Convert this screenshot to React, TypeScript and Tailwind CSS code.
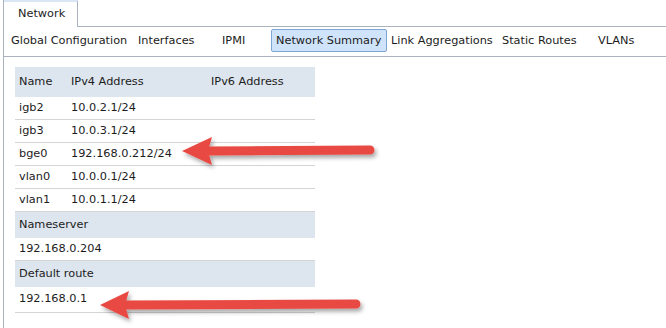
import React from 'react';

const subTabs = [
  { label: 'Global Configuration', w: 'w-[127px]' },
  { label: 'Interfaces', w: 'w-[84px]' },
  { label: 'IPMI', w: 'w-[49px]' },
  { label: 'Network Summary', w: 'w-[120px]', active: true },
  { label: 'Link Aggregations', w: 'w-[111px]' },
  { label: 'Static Routes', w: 'w-[96px]' },
  { label: 'VLANs', w: 'w-[60px]' },
];

const ifaces = [
  ['igb2', '10.0.2.1/24'],
  ['igb3', '10.0.3.1/24'],
  ['bge0', '192.168.0.212/24'],
  ['vlan0', '10.0.0.1/24'],
  ['vlan1', '10.0.1.1/24'],
];

function Arrow({ tip, back, end, y }: { tip: number; back: number; end: number; y: number }) {
  return (
    <g>
      <line x1={back - 4} y1={y} x2={end} y2={y - 1} stroke="#e84a42" strokeWidth={9} strokeLinecap="round" />
      <polygon points={`${tip},${y} ${back},${y - 14} ${back - 4},${y} ${back},${y + 14}`} fill="#e84a42" />
    </g>
  );
}

export default function App() {
  return (
    <div className="relative w-[666px] h-[328px] overflow-hidden bg-white font-['DejaVu_Sans',sans-serif] text-[11.3px] text-[#1c1c1c]">
      <div className="ml-[3px] h-full border-l border-[#aab3bd]">
        {/* top tab */}
        <div className="flex h-[27px]">
          <div className="w-[74px] border-r border-t-2 border-r-[#aab3bd] border-t-[#d9e6f5] pl-[14px] pt-[4px]">Network</div>
          <div className="flex-1 border-b border-[#aab3bd]" />
        </div>

        {/* sub tabs */}
        <div className="flex h-[30px] border-b border-[#aab3bd] pl-[2px] pt-[2px]">
          {subTabs.map((t) =>
            t.active ? (
              <div key={t.label} className={`${t.w} pl-[5px]`}>
                <div className="flex h-[23px] w-[116px] items-center rounded-[2px] border border-[#7fa6d2] bg-[#cfe3fa] pl-[4px] pt-[1px]">
                  {t.label}
                </div>
              </div>
            ) : (
              <div key={t.label} className={`${t.w} flex h-[23px] items-center pl-[5px] pt-[1px]`}>
                {t.label}
              </div>
            )
          )}
        </div>

        {/* summary table */}
        <div className="ml-[11px] mt-[10px] w-[300px]">
          <div className="flex h-[30px] items-center bg-[#dde5ee] pt-[1px]">
            <div className="w-[52px] pl-[4px]">Name</div>
            <div className="w-[140px] pl-[4px]">IPv4 Address</div>
            <div className="pl-[4px]">IPv6 Address</div>
          </div>
          {ifaces.map(([name, ip]) => (
            <div key={name} className="flex h-[23px] items-center border-b border-[#d4d4d4]">
              <div className="w-[52px] pl-[4px]">{name}</div>
              <div className="w-[140px] pl-[4px]">{ip}</div>
            </div>
          ))}
          <div className="flex h-[26px] items-center bg-[#dde5ee] pl-[4px]">Nameserver</div>
          <div className="flex h-[23px] items-center border-b border-[#d4d4d4] pl-[4px]">192.168.0.204</div>
          <div className="flex h-[26px] items-center bg-[#dde5ee] pl-[4px]">Default route</div>
          <div className="flex h-[26px] items-center border-b border-[#d4d4d4] pl-[4px]">192.168.0.1</div>
        </div>
      </div>

      {/* annotation arrows */}
      <svg className="pointer-events-none absolute left-0 top-0" width={666} height={328}>
        <defs>
          <filter id="sh" x="-10%" y="-50%" width="120%" height="200%">
            <feDropShadow dx="2" dy="3" stdDeviation="2" floodColor="#000" floodOpacity="0.35" />
          </filter>
        </defs>
        <g filter="url(#sh)">
          <Arrow tip={182} back={212} end={370} y={151} />
          <Arrow tip={100} back={129} end={356} y={305} />
        </g>
      </svg>
    </div>
  );
}
